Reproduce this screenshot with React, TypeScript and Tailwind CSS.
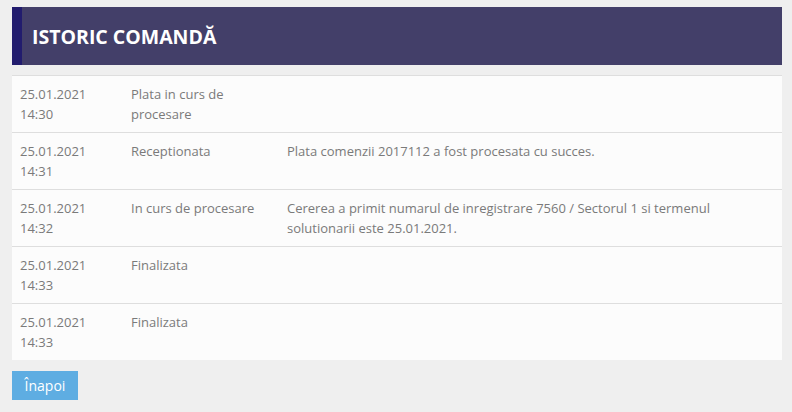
import React from 'react';

interface Entry { date: string; time: string; status: string; note?: string; }

const entries: Entry[] = [
  { date: '25.01.2021', time: '14:30', status: 'Plata in curs de procesare' },
  { date: '25.01.2021', time: '14:31', status: 'Receptionata', note: 'Plata comenzii 2017112 a fost procesata cu succes.' },
  { date: '25.01.2021', time: '14:32', status: 'In curs de procesare', note: 'Cererea a primit numarul de inregistrare 7560 / Sectorul 1 si termenul solutionarii este 25.01.2021.' },
  { date: '25.01.2021', time: '14:33', status: 'Finalizata' },
  { date: '25.01.2021', time: '14:33', status: 'Finalizata' },
];

const App: React.FC = () => (
  <div className="min-h-[412px] bg-[#efefef] pl-[12px] pr-[10px] pt-[7px] font-['Open_Sans',sans-serif]">
    <div className="flex h-[58px] items-center bg-[#433f69]">
      <div className="h-full w-[10px] bg-[#221c6e]" />
      <h1 className="pl-[10px] pt-[2px] text-[19.5px] font-bold text-white">ISTORIC COMANDĂ</h1>
    </div>

    <table className="mt-[10px] w-full border-collapse bg-[#fcfcfc] text-[13px] leading-[20px] text-[#7a7a7a]">
      <tbody>
        {entries.map((e, i) => (
          <tr key={i} className="border-t border-[#dedede] align-top">
            <td className="w-[111px] p-[8px]">{e.date}<br />{e.time}</td>
            <td className="w-[156px] p-[8px]">{e.status}</td>
            <td className="p-[8px] pr-[40px]">{e.note}</td>
          </tr>
        ))}
      </tbody>
    </table>

    <button type="button" className="mt-[11px] h-[29px] w-[66px] bg-[#5eade2] text-[14px] text-white">
      Înapoi
    </button>
  </div>
);

export default App;
